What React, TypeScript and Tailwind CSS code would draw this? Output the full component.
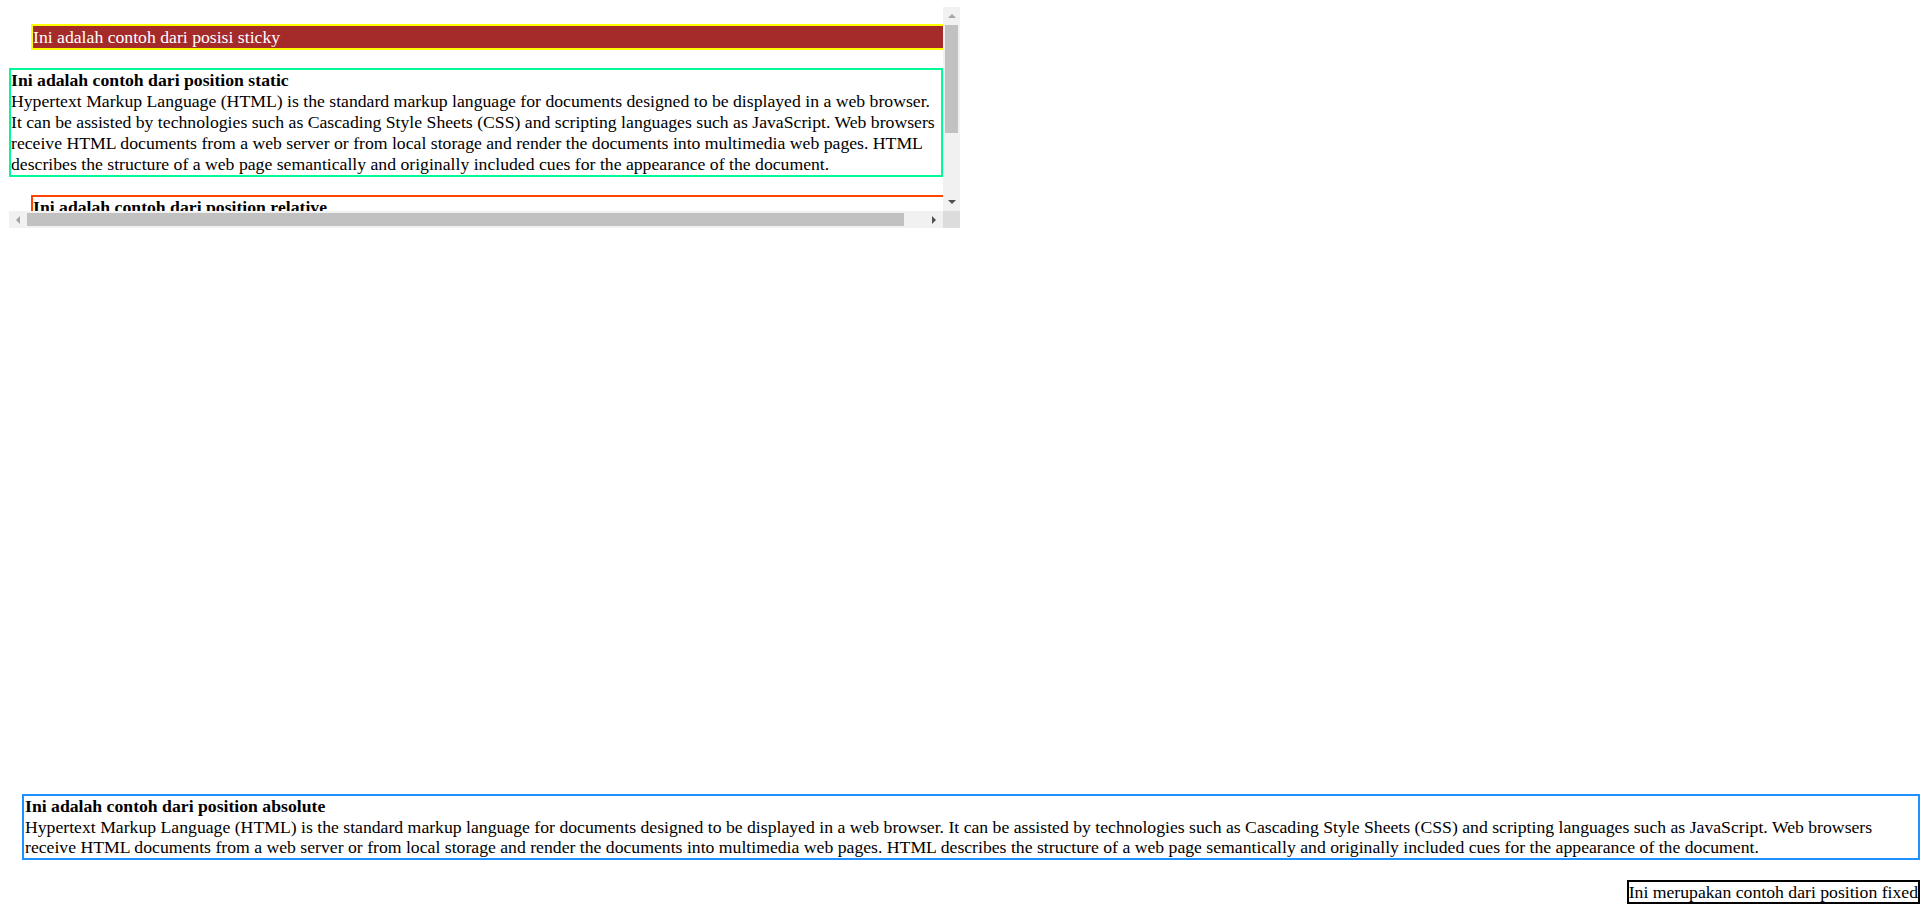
import React from 'react';

const paragraph =
  'Hypertext Markup Language (HTML) is the standard markup language for documents designed to be displayed in a web browser. It can be assisted by technologies such as Cascading Style Sheets (CSS) and scripting languages such as JavaScript. Web browsers receive HTML documents from a web server or from local storage and render the documents into multimedia web pages. HTML describes the structure of a web page semantically and originally included cues for the appearance of the document.';

// small triangle used in the scrollbar buttons
const Arrow: React.FC<{ points: string; color: string }> = ({ points, color }) => (
  <svg width="17" height="17" viewBox="0 0 17 17" className="block">
    <polygon points={points} fill={color} />
  </svg>
);

const App: React.FC = () => {
  return (
    <div className="h-screen flex flex-col bg-white text-black font-['Liberation_Serif',serif] text-[17.7px] overflow-hidden">
      {/* scroll box with sticky / static / relative */}
      <div className="ml-[9px] mt-[7px] w-[951px] h-[221px] shrink-0 grid grid-cols-[934px_17px] grid-rows-[204px_17px]">
        <div className="overflow-hidden">
          <div className="sticky top-0 mt-[17px] ml-[22px] w-full h-[26px] border-2 border-[#ffff00] bg-[#a52a2a] text-white leading-[22px] whitespace-nowrap">
            Ini adalah contoh dari posisi sticky
          </div>

          <div className="mt-[18px] border-2 border-[#00fa9a] leading-[21px]">
            <div className="font-bold">Ini adalah contoh dari position static</div>
            <div>{paragraph}</div>
          </div>

          <div className="mt-[18px] mb-[18px] ml-[22px] w-full border-2 border-[#ff4500] leading-[21px]">
            <div className="font-bold">Ini adalah contoh dari position relative</div>
            <div>{paragraph}</div>
          </div>
        </div>

        {/* vertical scrollbar */}
        <div className="flex flex-col bg-[#f1f1f1]">
          <Arrow points="5,11 13,11 9,7" color="#a3a3a3" />
          <div className="flex-1 pt-px">
            <div className="mx-[2px] h-[108px] bg-[#c1c1c1]" />
          </div>
          <Arrow points="5,6 13,6 9,10" color="#505050" />
        </div>

        {/* horizontal scrollbar */}
        <div className="flex bg-[#f1f1f1]">
          <Arrow points="11,5 11,13 7,9" color="#a3a3a3" />
          <div className="flex-1 pl-px flex items-center">
            <div className="w-[877px] h-[13px] bg-[#c1c1c1]" />
          </div>
          <Arrow points="6,5 6,13 10,9" color="#505050" />
        </div>

        <div className="bg-[#dcdcdc]" />
      </div>

      {/* absolute box */}
      <div className="mt-auto ml-[22px] border-2 border-[#1e90ff] pl-px leading-[20.7px]">
        <div className="font-bold">Ini adalah contoh dari position absolute</div>
        <div>{paragraph}</div>
      </div>

      {/* fixed box */}
      <div className="self-end mt-[20px] mb-[14px] border-2 border-black leading-[20px] whitespace-nowrap">
        Ini merupakan contoh dari position fixed
      </div>
    </div>
  );
};

export default App;
